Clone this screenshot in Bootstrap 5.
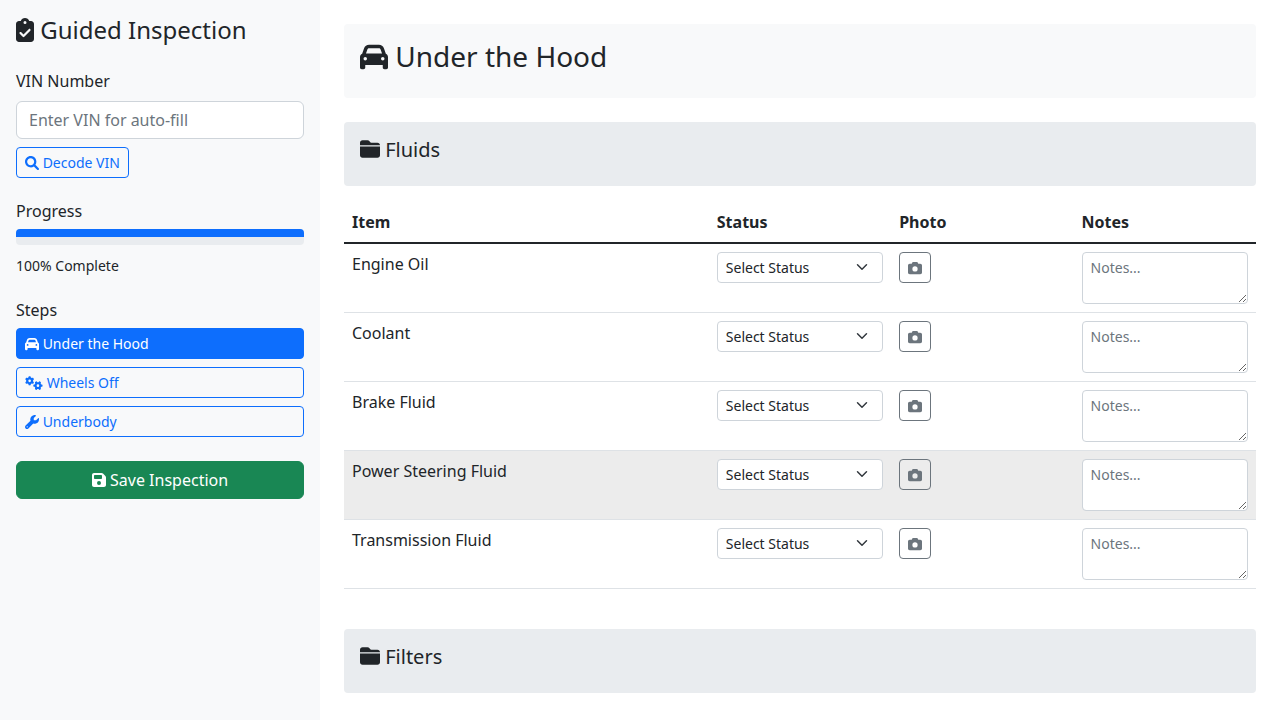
<!DOCTYPE html>
<html lang="en">
<head>
  <meta charset="UTF-8">
  <title>Guided Inspection</title>
  <link href="https://cdn.jsdelivr.net/npm/bootstrap@5.3.3/dist/css/bootstrap.min.css" rel="stylesheet">
  <style>
    :root {
      --bs-border-radius: .25rem;
      --bs-border-radius-sm: .2rem;
    }

    body {
      font-family: "Noto Sans", sans-serif;
      height: 720px;
      overflow: hidden;
    }

    .ico {
      width: 1em;
      height: 1em;
      fill: currentColor;
      vertical-align: -0.125em;
    }

    .ico-gears {
      width: 18px;
    }

    .ico-clip {
      width: .75em;
    }

    .ico-disk {
      width: .875em;
    }

    .side-panel {
      width: 320px;
      height: 720px;
      flex-shrink: 0;
    }

    .side-heading {
      font-size: 16px;
      font-weight: 400;
    }

    .side-progress {
      align-items: flex-start;
      background: #e9ecef;
    }

    .side-progress .progress-bar {
      height: 8px;
    }

    .form-control,
    .form-select {
      border-color: #ced4da;
    }

    .form-control::placeholder {
      color: #6c757d;
    }

    .main-panel {
      min-width: 0;
    }

    .group-head {
      margin-bottom: 16px;
      background: #e9ecef;
    }

    .check-table {
      margin-bottom: 40px;
    }

    .check-table textarea {
      height: 52px;
    }

    .check-table .row-hover > td {
      --bs-table-bg: #ececec;
    }

    .photo-btn {
      width: 32px;
      height: 31px;
      padding: 0;
      border-color: #6c757d;
      color: #6c757d;
    }

    .photo-btn .ico {
      vertical-align: -.2em;
    }
  </style>
</head>
<body>

<div class="d-flex">
  <!-- Sidebar -->
  <div class="side-panel bg-light p-3">
    <h4 class="fw-normal mb-4">
      <svg class="ico ico-clip" viewBox="0 0 384 512"><path d="M192 0c-41.8 0-77.4 26.7-90.5 64H64C28.7 64 0 92.7 0 128V448c0 35.3 28.7 64 64 64H320c35.3 0 64-28.7 64-64V128c0-35.3-28.7-64-64-64H282.5C269.4 26.7 233.8 0 192 0zm0 64a32 32 0 1 1 0 64 32 32 0 1 1 0-64zM305 273L177 401c-9.4 9.4-24.6 9.4-33.9 0L79 337c-9.4-9.4-9.4-24.6 0-33.9s24.6-9.4 33.9 0l47 47L271 239c9.4-9.4 24.6-9.4 33.9 0s9.4 24.6 0 33.9z"/></svg>
      Guided Inspection
    </h4>

    <label class="form-label d-block" for="vin">VIN Number</label>
    <input type="text" class="form-control mb-2" id="vin" placeholder="Enter VIN for auto-fill">
    <button type="button" class="btn btn-sm btn-outline-primary mb-4">
      <svg class="ico" viewBox="0 0 512 512"><path d="M500.3 443.7l-119.7-119.7c27.22-40.41 40.65-90.9 33.46-144.7C401.8 87.79 326.8 13.32 235.2 1.723C99.01-15.51-15.51 99.01 1.724 235.2c11.6 91.64 86.08 166.7 177.6 178.9c53.8 7.189 104.3-6.236 144.7-33.46l119.7 119.7c15.62 15.62 40.95 15.62 56.57 0C515.9 484.7 515.9 459.3 500.3 443.7zM79.1 208c0-70.58 57.42-128 128-128s128 57.42 128 128c0 70.58-57.42 128-128 128S79.1 278.6 79.1 208z"/></svg>
      Decode VIN
    </button>

    <h6 class="side-heading">Progress</h6>
    <div class="progress side-progress mb-2">
      <div class="progress-bar" style="width: 100%"></div>
    </div>
    <div class="mb-4"><small>100% Complete</small></div>

    <h6 class="side-heading">Steps</h6>
    <button type="button" class="btn btn-sm btn-primary w-100 text-start mb-2">
      <svg class="ico" viewBox="0 0 512 512"><path d="M135.2 117.4L109.1 192H402.9l-26.1-74.6C372.3 104.6 360.2 96 346.6 96H165.4c-13.6 0-25.7 8.6-30.2 21.4zM39.6 196.8L74.8 96.3C88.3 57.8 124.6 32 165.4 32H346.6c40.8 0 77.1 25.8 90.6 64.3l35.2 100.5c23.2 9.6 39.6 32.5 39.6 59.2V400v48c0 17.7-14.3 32-32 32H448c-17.7 0-32-14.3-32-32V400H96v48c0 17.7-14.3 32-32 32H32c-17.7 0-32-14.3-32-32V400 256c0-26.7 16.4-49.6 39.6-59.2zM128 288a32 32 0 1 0 -64 0 32 32 0 1 0 64 0zm288 32a32 32 0 1 0 0-64 32 32 0 1 0 0 64z"/></svg>
      Under the Hood
    </button>
    <button type="button" class="btn btn-sm btn-outline-primary w-100 text-start mb-2">
      <svg class="ico ico-gears" viewBox="0 0 640 512"><path d="M308.5 135.3c7.1-6.3 9.9-16.2 6.2-25c-2.3-5.3-4.8-10.5-7.6-15.5L304 89.4c-3-5-6.3-9.9-9.8-14.6c-5.7-7.6-15.7-10.1-24.7-7.1l-28.2 9.3c-10.7-8.8-23-16-36.2-20.9L199 27.1c-1.9-9.3-9.1-16.7-18.5-17.8C173.9 8.4 167.2 8 160.4 8h-.7c-6.8 0-13.5 .4-20.1 1.2c-9.4 1.1-16.6 8.6-18.5 17.8L115 56.1c-13.3 5-25.5 12.1-36.2 20.9L50.5 67.8c-9-3-19-.5-24.7 7.1c-3.5 4.7-6.8 9.6-9.9 14.6l-3 5.3c-2.8 5-5.3 10.2-7.6 15.6c-3.7 8.7-.9 18.6 6.2 25l22.2 19.8C32.6 161.9 32 168.9 32 176s.6 14.1 1.7 20.9L11.5 216.7c-7.1 6.3-9.9 16.2-6.2 25c2.3 5.3 4.8 10.5 7.6 15.6l3 5.2c3 5.1 6.3 9.9 9.9 14.6c5.7 7.6 15.7 10.1 24.7 7.1l28.2-9.3c10.7 8.8 23 16 36.2 20.9l6.1 29.1c1.9 9.3 9.1 16.7 18.5 17.8c6.7 .8 13.5 1.2 20.4 1.2s13.7-.4 20.4-1.2c9.4-1.1 16.6-8.6 18.5-17.8l6.1-29.1c13.3-5 25.5-12.1 36.2-20.9l28.2 9.3c9 3 19 .5 24.7-7.1c3.5-4.7 6.8-9.5 9.8-14.6l3.1-5.4c2.8-5 5.3-10.2 7.6-15.5c3.7-8.7 .9-18.6-6.2-25l-22.2-19.8c1.1-6.8 1.7-13.8 1.7-20.9s-.6-14.1-1.7-20.9l22.2-19.8zM112 176a48 48 0 1 1 96 0 48 48 0 1 1 -96 0zM504.7 500.5c6.3 7.1 16.2 9.9 25 6.2c5.3-2.3 10.5-4.8 15.5-7.6l5.4-3.1c5-3 9.9-6.3 14.6-9.8c7.6-5.7 10.1-15.7 7.1-24.7l-9.3-28.2c8.8-10.7 16-23 20.9-36.2l29.1-6.1c9.3-1.9 16.7-9.1 17.8-18.5c.8-6.7 1.2-13.5 1.2-20.4s-.4-13.7-1.2-20.4c-1.1-9.4-8.6-16.6-17.8-18.5L583.9 307c-5-13.3-12.1-25.5-20.9-36.2l9.3-28.2c3-9 .5-19-7.1-24.7c-4.7-3.5-9.6-6.8-14.6-9.9l-5.3-3c-5-2.8-10.2-5.3-15.6-7.6c-8.7-3.7-18.6-.9-25 6.2l-19.8 22.2c-6.8-1.1-13.8-1.7-20.9-1.7s-14.1 .6-20.9 1.7l-19.8-22.2c-6.3-7.1-16.2-9.9-25-6.2c-5.3 2.3-10.5 4.8-15.6 7.6l-5.2 3c-5.1 3-9.9 6.3-14.6 9.9c-7.6 5.7-10.1 15.7-7.1 24.7l9.3 28.2c-8.8 10.7-16 23-20.9 36.2L315.1 313c-9.3 1.9-16.7 9.1-17.8 18.5c-.8 6.7-1.2 13.5-1.2 20.4s.4 13.7 1.2 20.4c1.1 9.4 8.6 16.6 17.8 18.5l29.1 6.1c5 13.3 12.1 25.5 20.9 36.2l-9.3 28.2c-3 9-.5 19 7.1 24.7c4.7 3.5 9.5 6.8 14.6 9.8l5.4 3.1c5 2.8 10.2 5.3 15.5 7.6c8.7 3.7 18.6 .9 25-6.2l19.8-22.2c6.8 1.1 13.8 1.7 20.9 1.7s14.1-.6 20.9-1.7l19.8 22.2zM464 304a48 48 0 1 1 0 96 48 48 0 1 1 0-96z"/></svg>
      Wheels Off
    </button>
    <button type="button" class="btn btn-sm btn-outline-primary w-100 text-start mb-2">
      <svg class="ico" viewBox="0 0 512 512"><path d="M507.6 122.8c-2.904-12.09-18.25-16.13-27.04-7.338l-76.55 76.56l-83.1-.0002l0-83.1l76.55-76.56c8.791-8.789 4.75-24.14-7.336-27.04c-23.69-5.693-49.34-6.111-75.92 .2484c-61.45 14.7-109.4 66.9-119.2 129.3C189.8 160.8 192.3 186.7 200.1 210.1l-178.1 178.1c-28.12 28.12-28.12 73.69 0 101.8C35.97 504.1 54.37 512 72.81 512s36.84-7.031 50.91-21.09l178.1-178.1c23.46 7.736 49.31 10.24 76.17 6.004c62.41-9.84 114.6-57.8 129.3-119.2C513.7 172.1 513.3 146.5 507.6 122.8zM80 456c-13.25 0-24-10.75-24-24c0-13.26 10.75-24 24-24c13.26 0 24 10.74 24 24C104 445.3 93.26 456 80 456z"/></svg>
      Underbody
    </button>

    <button type="button" class="btn btn-success w-100 mt-3">
      <svg class="ico ico-disk" viewBox="0 0 448 512"><path d="M64 32C28.7 32 0 60.7 0 96V416c0 35.3 28.7 64 64 64H384c35.3 0 64-28.7 64-64V173.3c0-17-6.7-33.3-18.7-45.3L352 50.7C340 38.7 323.7 32 306.7 32H64zm0 96c0-17.7 14.3-32 32-32H288c17.7 0 32 14.3 32 32v64c0 17.7-14.3 32-32 32H96c-17.7 0-32-14.3-32-32V128zM224 288a64 64 0 1 1 0 128 64 64 0 1 1 0-128z"/></svg>
      Save Inspection
    </button>
  </div>

  <!-- Content -->
  <div class="main-panel flex-grow-1 p-4">
    <div class="bg-light rounded p-3 mb-4">
      <h3 class="fw-normal">
        <svg class="ico" viewBox="0 0 512 512"><path d="M135.2 117.4L109.1 192H402.9l-26.1-74.6C372.3 104.6 360.2 96 346.6 96H165.4c-13.6 0-25.7 8.6-30.2 21.4zM39.6 196.8L74.8 96.3C88.3 57.8 124.6 32 165.4 32H346.6c40.8 0 77.1 25.8 90.6 64.3l35.2 100.5c23.2 9.6 39.6 32.5 39.6 59.2V400v48c0 17.7-14.3 32-32 32H448c-17.7 0-32-14.3-32-32V400H96v48c0 17.7-14.3 32-32 32H32c-17.7 0-32-14.3-32-32V400 256c0-26.7 16.4-49.6 39.6-59.2zM128 288a32 32 0 1 0 -64 0 32 32 0 1 0 64 0zm288 32a32 32 0 1 0 0-64 32 32 0 1 0 0 64z"/></svg>
        Under the Hood
      </h3>
    </div>

    <div id="groups"></div>
  </div>
</div>

<script>
  const folderPath = "M448 480H64c-35.3 0-64-28.7-64-64V192H512V416c0 35.3-28.7 64-64 64zm64-320H0V96C0 60.7 28.7 32 64 32H192c20.1 0 39.1 9.5 51.2 25.6l19.2 25.6c6 8.1 15.5 12.8 25.6 12.8H448c35.3 0 64 28.7 64 64z";
  const cameraPath = "M149.1 64.8L138.7 96H64C28.7 96 0 124.7 0 160V416c0 35.3 28.7 64 64 64H448c35.3 0 64-28.7 64-64V160c0-35.3-28.7-64-64-64H373.3L362.9 64.8C356.4 45.2 338.1 32 317.4 32H194.6c-20.7 0-39 13.2-45.5 32.8zM256 192a96 96 0 1 1 0 192 96 96 0 1 1 0-192z";

  const fluids = ["Engine Oil", "Coolant", "Brake Fluid", "Power Steering Fluid", "Transmission Fluid"];

  let rows = "";
  fluids.forEach(item => {
    rows += `
      <tr class="${item === "Power Steering Fluid" ? "row-hover" : ""}">
        <td>${item}</td>
        <td>
          <select class="form-select form-select-sm">
            <option>Select Status</option>
            <option>Good</option>
            <option>Needs Attention</option>
          </select>
        </td>
        <td>
          <button type="button" class="btn btn-sm photo-btn">
            <svg class="ico" viewBox="0 0 512 512"><path d="${cameraPath}"/></svg>
          </button>
        </td>
        <td><textarea class="form-control form-control-sm" rows="2" placeholder="Notes..."></textarea></td>
      </tr>`;
  });

  document.getElementById("groups").innerHTML = `
    <div class="group-head rounded p-3">
      <h5 class="fw-normal"><svg class="ico" viewBox="0 0 512 512"><path d="${folderPath}"/></svg> Fluids</h5>
    </div>
    <table class="table check-table">
      <thead>
        <tr>
          <th style="width: 40%">Item</th>
          <th style="width: 20%">Status</th>
          <th style="width: 20%">Photo</th>
          <th style="width: 20%">Notes</th>
        </tr>
      </thead>
      <tbody class="table-group-divider">${rows}</tbody>
    </table>
    <div class="group-head rounded p-3">
      <h5 class="fw-normal"><svg class="ico" viewBox="0 0 512 512"><path d="${folderPath}"/></svg> Filters</h5>
    </div>`;
</script>

<script src="https://cdn.jsdelivr.net/npm/bootstrap@5.3.3/dist/js/bootstrap.bundle.min.js"></script>
</body>
</html>
